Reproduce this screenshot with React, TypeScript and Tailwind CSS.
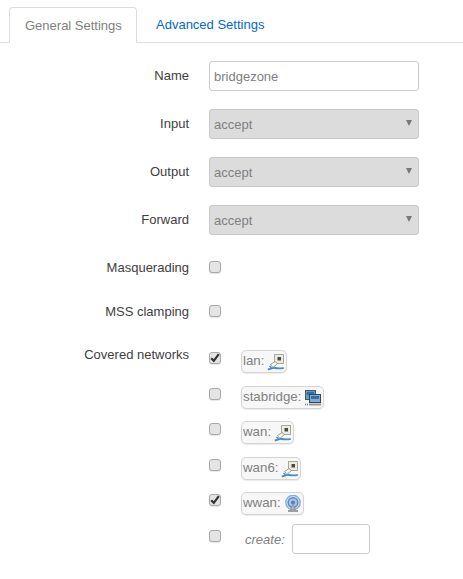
const EthernetIcon = () => (
  <svg width="18" height="18" viewBox="0 0 18 18" className="shrink-0">
    <rect x="7.5" y="1.5" width="9" height="9" fill="#ecebdf" stroke="#a8a89c" />
    <rect x="10.5" y="4" width="3.5" height="3.5" fill="#4a4a42" />
    <path d="M8 8.5 L3.5 11.5 L6 14.5 L10.5 10.5 Z" fill="#f6f6f0" stroke="#85857c" strokeWidth="0.8" />
    <path d="M0.8 16.5 C4 16 5.5 14.5 8 15 S13 15.8 16.8 14.8" fill="none" stroke="#4a8ac8" strokeWidth="1.8" />
    <path d="M2.5 13 L4.5 15" stroke="#4a8ac8" strokeWidth="1.4" />
  </svg>
);

const BridgeIcon = () => (
  <svg width="18" height="18" viewBox="0 0 18 18" className="shrink-0">
    <rect x="1.5" y="1.5" width="10" height="9" fill="#5b9bd0" stroke="#4a5560" />
    <rect x="3" y="3" width="7" height="3" fill="#2f6fa8" />
    <rect x="5.5" y="5.5" width="11" height="8" fill="#79aedb" stroke="#3a4650" />
    <rect x="7" y="7" width="8" height="3" fill="#2f6fa8" />
    <rect x="5" y="14.5" width="12" height="2" fill="#9a9a9a" />
    <path d="M1 15.5h1M3 15.5h1" stroke="#3d7fc4" strokeWidth="1.5" />
  </svg>
);

const WirelessIcon = () => (
  <svg width="18" height="18" viewBox="0 0 18 18" className="shrink-0">
    <circle cx="9" cy="7.5" r="7.2" fill="#cddcf0" stroke="#88abd9" strokeWidth="1.3" />
    <circle cx="9" cy="7.5" r="4.8" fill="#a9c4e6" stroke="#5a8fcc" strokeWidth="1.5" />
    <circle cx="9" cy="7.5" r="2" fill="#4a82c6" />
    <path d="M9 8 L6.5 15 H11.5 Z" fill="#b0b0b0" stroke="#808080" strokeWidth="0.6" />
    <rect x="4" y="15" width="10" height="2" fill="#a0a0a0" />
  </svg>
);

const Checkbox = ({ checked }: { checked?: boolean }) => (
  <span className="flex size-3 shrink-0 items-center justify-center rounded-[3px] border border-[#a8a8a8] bg-[#e4e4e4] shadow-[0_1px_1px_rgba(0,0,0,0.1)]">
    {checked && (
      <svg width="10" height="10" viewBox="0 0 10 10">
        <path d="M1.2 5.2 L3.8 7.8 L8.8 1.2" fill="none" stroke="#333333" strokeWidth="2.2" />
      </svg>
    )}
  </span>
);

const Row = ({ label, className, children }: { label: string; className: string; children: React.ReactNode }) => (
  <div className={`flex ${className}`}>
    <div className="w-[189px] shrink-0 pt-[6px] text-right text-[#404040]">{label}</div>
    <div className="ml-5 min-w-0">{children}</div>
  </div>
);

const SelectBox = () => (
  <div className="flex h-[30px] w-[210px] items-center justify-between rounded-[3px] border border-[#c8c8c8] bg-[#dcdcdc] pl-1 pr-[6px] text-[#808080]">
    <span className="pt-px">accept</span>
    <span className="mb-[3px] h-0 w-0 border-x-[3px] border-t-[6px] border-x-transparent border-t-[#777]" />
  </div>
);

const Network = ({ name, icon, checked, className }: { name: string; icon: React.ReactNode; checked?: boolean; className: string }) => (
  <div className={`flex ${className}`}>
    <div className="mt-[2px]">
      <Checkbox checked={checked} />
    </div>
    <div className="ml-5 flex h-[23px] items-center gap-[3px] rounded-[5px] border border-[#d4d4d4] bg-[#f7f7f7] pl-px pr-px text-[13.3px] text-[#808080] shadow-[0_1px_1px_rgba(0,0,0,0.08)]">
      <span className="pb-[2px]">{name}</span>
      {icon}
    </div>
  </div>
);

export default function App() {
  return (
    <div className="h-[579px] w-[463px] overflow-hidden bg-white pt-[7px] font-['Liberation_Sans',Arial,sans-serif] text-[13px] leading-[18px]">
      <div className="flex h-9 border-b border-[#dddddd] pl-[9px]">
        <div className="h-9 w-[128px] rounded-t-[4px] border border-b-0 border-[#dddddd] bg-white pl-[15px] pt-[9px] text-[#808080]">
          General Settings
        </div>
        <div className="pl-[19px] pt-[9px] text-[#0069d6]">Advanced Settings</div>
      </div>

      <Row label="Name" className="mt-[18px]">
        <div className="flex h-[30px] w-[210px] items-center rounded-[3px] border border-[#cccccc] bg-white pl-1 pt-px text-[#808080]">
          bridgezone
        </div>
      </Row>
      <Row label="Input" className="mt-[18px]">
        <SelectBox />
      </Row>
      <Row label="Output" className="mt-[18px]">
        <SelectBox />
      </Row>
      <Row label="Forward" className="mt-[18px]">
        <SelectBox />
      </Row>

      <Row label="Masquerading" className="mt-[18px]">
        <div className="mt-2">
          <Checkbox />
        </div>
      </Row>
      <Row label="MSS clamping" className="mt-5">
        <div className="mt-2">
          <Checkbox />
        </div>
      </Row>

      <Row label="Covered networks" className="mt-[19px]">
        <div className="flex flex-col">
          <Network name="lan:" icon={<EthernetIcon />} checked className="mt-[10px]" />
          <Network name="stabridge:" icon={<BridgeIcon />} className="mt-[13px]" />
          <Network name="wan:" icon={<EthernetIcon />} className="mt-3" />
          <Network name="wan6:" icon={<EthernetIcon />} className="mt-[13px]" />
          <Network name="wwan:" icon={<WirelessIcon />} checked className="mt-3" />
          <div className="mt-[9px] flex items-center">
            <span className="mb-[6px]">
              <Checkbox />
            </span>
            <span className="ml-6 pt-[2px] italic text-[#808080]">create:</span>
            <div className="ml-[7px] h-[30px] w-[78px] rounded-[3px] border border-[#cccccc] bg-white" />
          </div>
        </div>
      </Row>
    </div>
  );
}
